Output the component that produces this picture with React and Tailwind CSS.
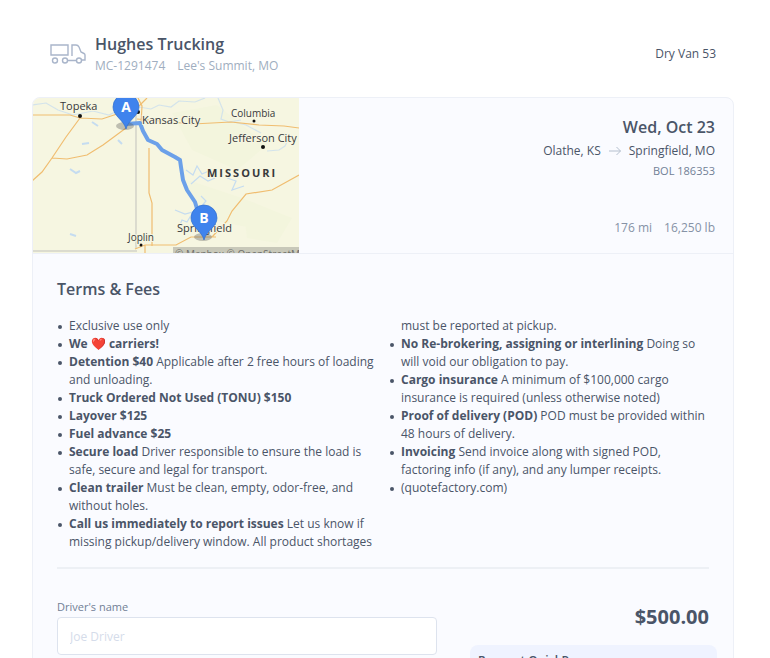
import React, { useState } from 'react';

const TERMS = [
  { text: 'Exclusive use only' },
  { title: 'We ❤️ carriers!' },
  { title: 'Detention $40', text: 'Applicable after 2 free hours of loading and unloading.' },
  { title: 'Truck Ordered Not Used (TONU) $150' },
  { title: 'Layover $125' },
  { title: 'Fuel advance $25' },
  { title: 'Secure load', text: 'Driver responsible to ensure the load is safe, secure and legal for transport.' },
  { title: 'Clean trailer', text: 'Must be clean, empty, odor-free, and without holes.' },
  { title: 'Call us immediately to report issues', text: 'Let us know if missing pickup/delivery window. All product shortages must be reported at pickup.' },
  { title: 'No Re-brokering, assigning or interlining', text: 'Doing so will void our obligation to pay.' },
  { title: 'Cargo insurance', text: 'A minimum of $100,000 cargo insurance is required (unless otherwise noted)' },
  { title: 'Proof of delivery (POD)', text: 'POD must be provided within 48 hours of delivery.' },
  { title: 'Invoicing', text: 'Send invoice along with signed POD, factoring info (if any), and any lumper receipts.' },
  { text: '(quotefactory.com)' },
];

export default function App() {
  return (
    <div className="pt-8 pl-8 pr-9 bg-white font-['Open_Sans',sans-serif] text-[#4a5568]">
      <CarrierHeader />
      <main className="mt-[21px] border border-[#edf0f7] rounded-lg overflow-hidden bg-[#fafbff]">
        <LoadSummary />
        <div className="pt-[23px] px-6 pb-8">
          <Terms />
          <Confirm />
        </div>
      </main>
    </div>
  );
}

function CarrierHeader() {
  return (
    <header className="flex items-center px-[18px]">
      <TruckIcon />
      <div className="ml-[9px] flex-1">
        <h1 className="text-[16px] leading-6 font-semibold">Hughes Trucking</h1>
        <p className="flex gap-3 text-[12px] leading-5 text-[#a0aec0]">
          <span>MC-1291474</span>
          <span>Lee's Summit, MO</span>
        </p>
      </div>
      <p className="text-[12px] leading-5">Dry Van 53</p>
    </header>
  );
}

function LoadSummary() {
  return (
    <section className="flex border-b border-[#edf0f7]">
      <RouteMap />
      <div className="flex-1 flex flex-col items-end pt-[17px] pr-[18px] pb-[15px] leading-5">
        <h2 className="text-[16px] leading-6 font-semibold">Wed, Oct 23</h2>
        <p className="mt-0.5 flex items-center gap-2 text-[12px]">
          Olathe, KS
          <svg width="12" height="10" viewBox="0 0 12 10" fill="none" stroke="#b4bfce">
            <path d="M0 5h11.5M7.5 1l4 4-4 4" />
          </svg>
          Springfield, MO
        </p>
        <p className="text-[11px] text-[#718096]">BOL 186353</p>
        <p className="mt-auto flex gap-3 text-[12px] text-[#8692a6]">
          <span>176 mi</span>
          <span>16,250 lb</span>
        </p>
      </div>
    </section>
  );
}

function Terms() {
  return (
    <section className="pb-4 border-b-2 border-[#edf0f5]">
      <h2 className="mb-4 text-[16px] leading-6 font-semibold">Terms &amp; Fees</h2>
      <ul className="columns-2 gap-3 [orphans:2] [widows:1] text-[12px] leading-[18px]">
        {TERMS.map((term, i) => (
          <li key={i} className="pl-3 last:pb-[18px] before:inline-block before:align-middle before:size-1 before:-ml-[11px] before:mr-[7px] before:rounded-full before:bg-[#4a5568]">
            {term.title && <strong className="font-bold">{term.title} </strong>}
            {term.text}
          </li>
        ))}
      </ul>
    </section>
  );
}

function Confirm() {
  const [driver, setDriver] = useState('');

  return (
    <form className="flex justify-between pt-7">
      <div className="w-[380px]">
        <label htmlFor="driver" className="block text-[11px] leading-5 text-[#718096]">Driver's name</label>
        <input
          id="driver"
          type="text"
          value={driver}
          onChange={(e) => setDriver(e.target.value)}
          placeholder="Joe Driver"
          className="w-full h-[38px] px-3 bg-white border border-[#dde3ee] rounded text-[12px] placeholder:text-[#d5dcea]"
        />
      </div>
      <div className="w-[247px] -mr-2 pt-2">
        <p className="pr-2 text-right text-[20px] leading-6 font-bold">$500.00</p>
        <div className="mt-4 px-2 py-1.5 rounded-lg bg-[#eff3ff] text-[12px] leading-5 font-semibold">Request QuickPay</div>
      </div>
    </form>
  );
}

function TruckIcon() {
  return (
    <svg width="36" height="22" viewBox="0 0 36 22" fill="none" stroke="#a9b5ca" strokeWidth="1.4">
      <path d="M1 2h17v10H1zM22 13V2h4q2 0 3 2l2 5 3 1.500q1 .5 1 1.500v5h-3M17.500 17.500h9" />
      <circle cx="5" cy="17.500" r="2.500" />
      <circle cx="15" cy="17.500" r="2.500" />
      <circle cx="29" cy="17.500" r="2.500" />
    </svg>
  );
}

function Pin({ x, y, letter }) {
  return (
    <g transform={`translate(${x} ${y})`}>
      <ellipse cx="-1" cy="-2" rx="9" ry="4" fill="#555" opacity=".35" />
      <path d="M0 1C-2-8-13-12-13-21a13 13 0 0 1 26 0C13-12 2-8 0 1z" fill="#3f83ed" stroke="#2f6fce" strokeWidth=".7" />
      <text x="0" y="-16" textAnchor="middle" fontSize="14" fontWeight="700" fill="#fff">{letter}</text>
    </g>
  );
}

function RouteMap() {
  return (
    <svg width="266" height="155" viewBox="1 0 266 155" className="shrink-0" role="img" aria-label="Route map">
      <rect width="267" height="155" fill="#f6f6e1" />
      <path d="M140 15l45-8 50 40-30 25-45-20zM150 80l60 20 10 30-50-10zM210 100l50 20-15 25-30-5z" fill="#f3f5dd" />
      <g fill="none" stroke="#c5dcf0" strokeWidth="1.200">
        <path d="M0 7l14-2 12 7 15 5 20-4 16 4 10-5M107 9l12 2 8-4 12 2 8-6 16 1 10-4M186 0l5 12-2 9 8 3 12-2M202 24l12 3 15 8" opacity=".7" />
        <path d="M235 53l12-1 6-4 4-8" opacity=".7" />
        <path d="M154 72l7 5 4-9 5 8 9-4M159 86l9-8 8 5 7-3M195 80l9 3-4 9 12-4M143 112l10 4 8-2-6 10-5-2-5 12M169 98l5 5-6 7" />
        <path d="M60 24l6 4M50 46l7-1M38 71l6 4 4-2M86 42l4 4M38 136l6 2" strokeWidth="2" />
      </g>
      <path d="M104 0v151M0 153h105" stroke="#c1c1bc" fill="none" />
      <g fill="none" stroke="#f0bd70" strokeWidth="1.200">
        <path d="M0 17h38l10 3 22 1 18-6 14-12M48 20L34 39 20 60 10 74 0 83M94 30L71 47 55 57 35 61 20 60M106 0l4 8-1 18M115 0L107 8M117 50v45l3 10v43M105 21l56 5 38-2 28 3 25 1 15 2M103 151l10-4h31l15-8h25M180 139l15-16 5-10 14-17 26-4 27-15M113 147v8" />
      </g>
      <path d="M94 26l14-1 3 8 5 9 9 4 5 6 13 7 5 3 1 7 2 13 4 10 8 12 9 30" fill="none" stroke="#6ba0e9" strokeWidth="4" strokeLinejoin="round" />
      <g fill="#111">
        <circle cx="48" cy="18" r="2" />
        <circle cx="106" cy="14" r="2" />
        <circle cx="222" cy="23" r="1.500" />
        <circle cx="231" cy="49" r="2" />
        <circle cx="109" cy="147" r="1.500" />
      </g>
      <g fontSize="11" fill="#38393b" stroke="#f6f6e1" strokeWidth="2" paintOrder="stroke">
        <text x="28" y="12">Topeka</text>
        <text x="110" y="26">Kansas City</text>
        <text x="199" y="19" fontSize="10">Columbia</text>
        <text x="197" y="44">Jefferson City</text>
        <text x="96" y="143" fontSize="10">Joplin</text>
        <text x="145" y="134">Springfield</text>
        <text x="175" y="79" fontWeight="700" letterSpacing="2">MISSOURI</text>
      </g>
      <Pin x={94} y={30} letter="A" />
      <Pin x={172} y={141} letter="B" />
      <rect x="141" y="149" width="126" height="6" fill="#c3c3b5" opacity=".9" />
      <text x="143" y="160" fontSize="10" fill="#6d6d69">© Mapbox © OpenStreetMap</text>
    </svg>
  );
}
